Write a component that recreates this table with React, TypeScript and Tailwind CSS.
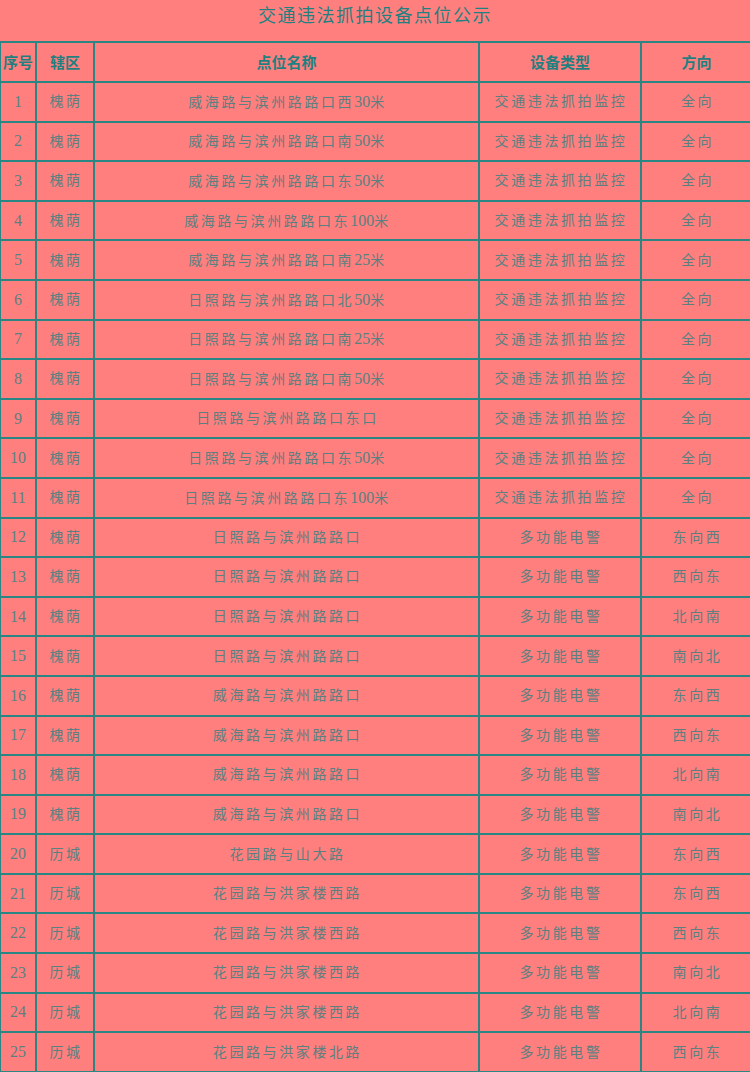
const ROWS: [string, string, string, string][] = [
  ['槐荫', '威海路与滨州路路口西30米', '交通违法抓拍监控', '全向'],
  ['槐荫', '威海路与滨州路路口南50米', '交通违法抓拍监控', '全向'],
  ['槐荫', '威海路与滨州路路口东50米', '交通违法抓拍监控', '全向'],
  ['槐荫', '威海路与滨州路路口东100米', '交通违法抓拍监控', '全向'],
  ['槐荫', '威海路与滨州路路口南25米', '交通违法抓拍监控', '全向'],
  ['槐荫', '日照路与滨州路路口北50米', '交通违法抓拍监控', '全向'],
  ['槐荫', '日照路与滨州路路口南25米', '交通违法抓拍监控', '全向'],
  ['槐荫', '日照路与滨州路路口南50米', '交通违法抓拍监控', '全向'],
  ['槐荫', '日照路与滨州路路口东口', '交通违法抓拍监控', '全向'],
  ['槐荫', '日照路与滨州路路口东50米', '交通违法抓拍监控', '全向'],
  ['槐荫', '日照路与滨州路路口东100米', '交通违法抓拍监控', '全向'],
  ['槐荫', '日照路与滨州路路口', '多功能电警', '东向西'],
  ['槐荫', '日照路与滨州路路口', '多功能电警', '西向东'],
  ['槐荫', '日照路与滨州路路口', '多功能电警', '北向南'],
  ['槐荫', '日照路与滨州路路口', '多功能电警', '南向北'],
  ['槐荫', '威海路与滨州路路口', '多功能电警', '东向西'],
  ['槐荫', '威海路与滨州路路口', '多功能电警', '西向东'],
  ['槐荫', '威海路与滨州路路口', '多功能电警', '北向南'],
  ['槐荫', '威海路与滨州路路口', '多功能电警', '南向北'],
  ['历城', '花园路与山大路', '多功能电警', '东向西'],
  ['历城', '花园路与洪家楼西路', '多功能电警', '东向西'],
  ['历城', '花园路与洪家楼西路', '多功能电警', '西向东'],
  ['历城', '花园路与洪家楼西路', '多功能电警', '南向北'],
  ['历城', '花园路与洪家楼西路', '多功能电警', '北向南'],
  ['历城', '花园路与洪家楼北路', '多功能电警', '西向东'],
];

// 数字用衬线字体、不加字距；汉字加字距
function Mixed({ text }: { text: string }) {
  const parts = text.split(/(\d+)/).filter(Boolean);
  return (
    <>
      {parts.map((p, i) =>
        /^\d+$/.test(p) ? (
          <span key={i} className="text-[16px] tracking-normal">
            {p}
          </span>
        ) : (
          <span key={i} className="tracking-[2.6px]">
            {p}
          </span>
        ),
      )}
    </>
  );
}

const CELL = 'border-2 border-[#2a8585] p-0 text-center';

export default function App() {
  return (
    <div
      className="w-[750px] h-[1072px] bg-[#ff7f7f] overflow-hidden"
      style={{ fontFamily: '"Liberation Serif", "Noto Sans CJK SC", serif' }}
    >
      {/* 标题 */}
      <div
        className="h-[41px] text-center text-[18px] leading-[28px] tracking-[1.5px] text-[#1f8080]"
        style={{ fontFamily: '"Noto Sans CJK SC", sans-serif' }}
      >
        交通违法抓拍设备点位公示
      </div>

      <table className="w-[752px] -ml-[1px] table-fixed border-collapse">
        <colgroup>
          <col className="w-[36px]" />
          <col className="w-[58px]" />
          <col className="w-[385px]" />
          <col className="w-[162px]" />
          <col className="w-[111px]" />
        </colgroup>
        <thead>
          <tr
            className="h-[40px] text-[15px] text-[#1f8080]"
            style={{ fontFamily: '"Noto Sans CJK SC", sans-serif' }}
          >
            {['序号', '辖区', '点位名称', '设备类型', '方向'].map((h) => (
              <th key={h} className={`${CELL} font-bold`}>
                {h}
              </th>
            ))}
          </tr>
        </thead>
        <tbody className="text-[14px] text-[#5c7f80]">
          {ROWS.map((r, i) => (
            <tr key={i} className="h-[39.6px]">
              <td className={`${CELL} text-[16px]`}>{i + 1}</td>
              <td className={`${CELL} pl-[2px]`}>
                <Mixed text={r[0]} />
              </td>
              <td className={`${CELL} pl-[2px]`}>
                <Mixed text={r[1]} />
              </td>
              <td className={`${CELL} pl-[2px]`}>
                <Mixed text={r[2]} />
              </td>
              <td className={`${CELL} pl-[2px]`}>
                <Mixed text={r[3]} />
              </td>
            </tr>
          ))}
        </tbody>
      </table>
    </div>
  );
}
